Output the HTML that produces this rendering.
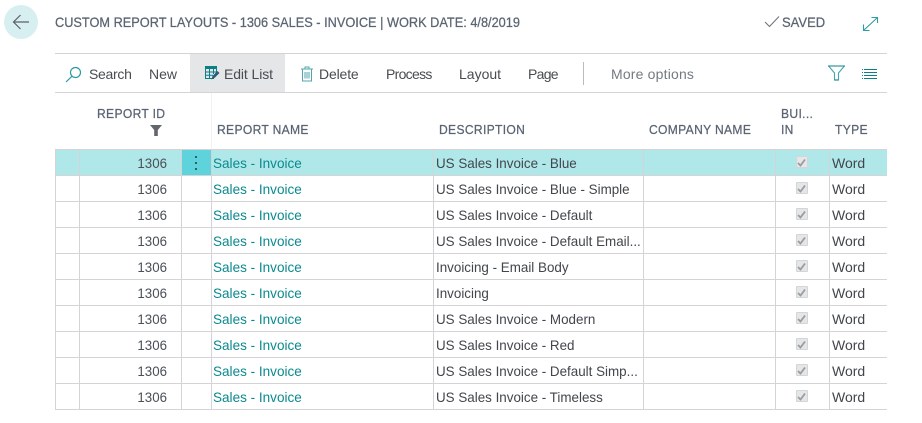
<!DOCTYPE html>
<html><head><meta charset="utf-8">
<style>
html,body{margin:0;padding:0;background:#fff}
#p{position:relative;width:922px;height:423px;overflow:hidden;background:#fff;font-family:"Liberation Sans",sans-serif;font-size:14px;color:#4b5058}
#p div,#p svg{position:absolute}
.t{white-space:nowrap;line-height:18px}
.h{color:#5a6472;font-size:13px;white-space:nowrap;line-height:16px;letter-spacing:.35px;transform:scaleX(.93);transform-origin:0 0;-webkit-text-stroke:.25px #5a6472}
.tb{color:#484c52;font-size:14px;white-space:nowrap;line-height:18px;top:65px}
.hl{left:55px;width:832px;height:1px;background:#d4d4d6}
.vl{width:1px;top:149px;height:261px;background:#d4d4d6}
.id{left:80px;width:87px;text-align:right;transform:scaleX(.95);transform-origin:100% 0}
.nm{left:213px;color:#0a8a8f;transform:scaleX(.967);transform-origin:0 0}
.ds{left:436px;color:#42464c;transform:scaleX(.957);transform-origin:0 0}
.wd{left:832px;color:#42464c}
.cb{left:796px;width:10px;height:10px;background:#e4e6e7;border:1px solid #d3d6d8;border-radius:1px}
.ck{left:796px}
</style></head><body><div id="p">

<div style="left:4px;top:5px;width:34px;height:34px;border-radius:50%;background:#d8eff2"></div>
<svg style="left:12px;top:13px" width="18" height="18" viewBox="0 0 18 18" fill="none" stroke="#5c6068" stroke-width="1.2"><path d="M1.5 9H17M8.5 2L1.5 9L8.5 16"/></svg>

<div class="t" style="left:55px;top:13px;font-size:14px;color:#5a6472;transform:scaleX(.911);transform-origin:0 0;-webkit-text-stroke:.25px #5a6472">CUSTOM REPORT LAYOUTS - 1306 SALES - INVOICE | WORK DATE: 4/8/2019</div>

<svg style="left:764px;top:15px" width="16" height="13" viewBox="0 0 16 13" fill="none" stroke="#6a7079" stroke-width="1"><path d="M1 7L5.5 11.5L15 1.5"/></svg>
<div class="t" style="left:782px;top:13px;font-size:14px;color:#5a6472;transform:scaleX(.93);transform-origin:0 0;-webkit-text-stroke:.25px #5a6472">SAVED</div>
<svg style="left:862px;top:16px" width="17" height="16" viewBox="0 0 17 16" fill="none" stroke="#2f9ca3" stroke-width="1.1"><path d="M1.5 14.5L15.5 1.5M9.5 1.5H15.5V7M1.500 8.500V14.500H7.500"/></svg>

<div class="hl" style="top:53px"></div>
<div class="hl" style="top:92px"></div>
<div style="left:190px;top:54px;width:95px;height:38px;background:#e5e6e8"></div>

<svg style="left:65px;top:66px" width="17" height="17" viewBox="0 0 17 17" fill="none" stroke="#2f9ca3" stroke-width="1.2"><circle cx="10.5" cy="6.5" r="5"/><path d="M7 10.2L1 16"/></svg>
<div class="tb" style="left:89px;letter-spacing:-.3px">Search</div>
<div class="tb" style="left:149px">New</div>
<svg style="left:205px;top:66px" width="15" height="14" viewBox="0 0 15 14" fill="none"><path d="M0 0H12V3H0Z" fill="#0a7f86"/><path d="M.5 3V12.5H9M4.500 3V12.500M8.500 3V8M.5 6H11.500M.5 9.300H8M11.500 3V6" stroke="#0a7f86"/><path d="M6.500 13.500L7.500 10L12.500 5L14.500 7L9.500 12Z" fill="#2b5f73"/></svg>
<div class="tb" style="left:224px;letter-spacing:-.1px">Edit List</div>
<svg style="left:300px;top:66px" width="14" height="16" viewBox="0 0 14 16" fill="none" stroke="#4fa7ae"><path d="M1 3H13M5 3V1H9V3M2.500 3V15H11.500V3M5 6V12.500M7 6V12.500M9 6V12.500"/></svg>
<div class="tb" style="left:319px;letter-spacing:-.15px">Delete</div>
<div class="tb" style="left:386px;letter-spacing:-.7px">Process</div>
<div class="tb" style="left:459px">Layout</div>
<div class="tb" style="left:528px;letter-spacing:-.7px">Page</div>
<div style="left:583px;top:62px;width:1px;height:23px;background:#b9bbbe"></div>
<div class="tb" style="left:611px;color:#747a82;letter-spacing:.18px">More options</div>
<svg style="left:828px;top:65px" width="17" height="16" viewBox="0 0 17 16" fill="none" stroke="#46a5ac" stroke-width="1.1"><path d="M0 1H17" stroke="#0a7f86"/><path d="M1 1.500L6.500 8V15H10.500V8L16 1.500"/><path d="M6.500 15H10.500" stroke="#0a7f86"/></svg>
<svg style="left:862px;top:69px" width="15" height="10" viewBox="0 0 15 10" stroke="#0a7f86"><path d="M0 .5H1M2 .5H15M0 3.500H1M2 3.500H15M0 6.500H1M2 6.500H15M0 9.500H1M2 9.500H15"/></svg>

<div style="left:211px;top:93px;width:1px;height:56px;background:#f2f2f3"></div>
<div class="h" style="left:97px;top:106px">REPORT ID</div>
<svg style="left:150px;top:125px" width="12" height="11" viewBox="0 0 12 11"><path d="M0 0H12L7.800 5V11H4.200V5Z" fill="#63666b"/></svg>
<div class="h" style="left:217px;top:122px">REPORT NAME</div>
<div class="h" style="left:439px;top:122px">DESCRIPTION</div>
<div class="h" style="left:649px;top:122px">COMPANY NAME</div>
<div class="h" style="left:781px;top:106px">BUI...</div>
<div class="h" style="left:781px;top:122px">IN</div>
<div class="h" style="left:835px;top:122px">TYPE</div>

<div style="left:55px;top:149px;width:832px;height:27px;background:#b0e8ea"></div>
<div style="left:182px;top:150px;width:29px;height:25px;background:#5fd3dc"></div>
<svg style="left:194px;top:156px" width="4" height="15" viewBox="0 0 4 15" fill="#2d5f68"><rect x="1" y="0" width="2" height="2"/><rect x="1" y="6" width="2" height="2"/><rect x="1" y="12" width="2" height="2"/></svg>

<div class="hl" style="top:149px"></div><div class="hl" style="top:175px"></div><div class="hl" style="top:201px"></div><div class="hl" style="top:227px"></div><div class="hl" style="top:253px"></div><div class="hl" style="top:279px"></div><div class="hl" style="top:305px"></div><div class="hl" style="top:331px"></div><div class="hl" style="top:357px"></div><div class="hl" style="top:383px"></div><div class="hl" style="top:409px"></div>
<div class="vl" style="left:55px"></div><div class="vl" style="left:79px"></div><div class="vl" style="left:181px"></div><div class="vl" style="left:211px"></div><div class="vl" style="left:433px"></div><div class="vl" style="left:643px"></div><div class="vl" style="left:775px"></div><div class="vl" style="left:829px"></div>

<div class="t id" style="top:154px">1306</div><div class="t nm" style="top:154px">Sales - Invoice</div><div class="t ds" style="top:154px">US Sales Invoice - Blue</div><div class="cb" style="top:156px"></div><div class="t wd" style="top:154px">Word</div>
<div class="t id" style="top:180px">1306</div><div class="t nm" style="top:180px">Sales - Invoice</div><div class="t ds" style="top:180px">US Sales Invoice - Blue - Simple</div><div class="cb" style="top:182px"></div><div class="t wd" style="top:180px">Word</div>
<div class="t id" style="top:206px">1306</div><div class="t nm" style="top:206px">Sales - Invoice</div><div class="t ds" style="top:206px">US Sales Invoice - Default</div><div class="cb" style="top:208px"></div><div class="t wd" style="top:206px">Word</div>
<div class="t id" style="top:232px">1306</div><div class="t nm" style="top:232px">Sales - Invoice</div><div class="t ds" style="top:232px">US Sales Invoice - Default Email...</div><div class="cb" style="top:234px"></div><div class="t wd" style="top:232px">Word</div>
<div class="t id" style="top:258px">1306</div><div class="t nm" style="top:258px">Sales - Invoice</div><div class="t ds" style="top:258px">Invoicing - Email Body</div><div class="cb" style="top:260px"></div><div class="t wd" style="top:258px">Word</div>
<div class="t id" style="top:284px">1306</div><div class="t nm" style="top:284px">Sales - Invoice</div><div class="t ds" style="top:284px">Invoicing</div><div class="cb" style="top:286px"></div><div class="t wd" style="top:284px">Word</div>
<div class="t id" style="top:310px">1306</div><div class="t nm" style="top:310px">Sales - Invoice</div><div class="t ds" style="top:310px">US Sales Invoice - Modern</div><div class="cb" style="top:312px"></div><div class="t wd" style="top:310px">Word</div>
<div class="t id" style="top:336px">1306</div><div class="t nm" style="top:336px">Sales - Invoice</div><div class="t ds" style="top:336px">US Sales Invoice - Red</div><div class="cb" style="top:338px"></div><div class="t wd" style="top:336px">Word</div>
<div class="t id" style="top:362px">1306</div><div class="t nm" style="top:362px">Sales - Invoice</div><div class="t ds" style="top:362px">US Sales Invoice - Default Simp...</div><div class="cb" style="top:364px"></div><div class="t wd" style="top:362px">Word</div>
<div class="t id" style="top:388px">1306</div><div class="t nm" style="top:388px">Sales - Invoice</div><div class="t ds" style="top:388px">US Sales Invoice - Timeless</div><div class="cb" style="top:390px"></div><div class="t wd" style="top:388px">Word</div>

<svg class="ck" style="top:157px" width="11" height="11" viewBox="0 0 11 11" fill="none" stroke="#9a9c9e" stroke-width="1.8"><path d="M2 6L4.500 8.500L9 2.500"/></svg>
<svg class="ck" style="top:183px" width="11" height="11" viewBox="0 0 11 11" fill="none" stroke="#9a9c9e" stroke-width="1.8"><path d="M2 6L4.500 8.500L9 2.500"/></svg>
<svg class="ck" style="top:209px" width="11" height="11" viewBox="0 0 11 11" fill="none" stroke="#9a9c9e" stroke-width="1.8"><path d="M2 6L4.500 8.500L9 2.500"/></svg>
<svg class="ck" style="top:235px" width="11" height="11" viewBox="0 0 11 11" fill="none" stroke="#9a9c9e" stroke-width="1.8"><path d="M2 6L4.500 8.500L9 2.500"/></svg>
<svg class="ck" style="top:261px" width="11" height="11" viewBox="0 0 11 11" fill="none" stroke="#9a9c9e" stroke-width="1.8"><path d="M2 6L4.500 8.500L9 2.500"/></svg>
<svg class="ck" style="top:287px" width="11" height="11" viewBox="0 0 11 11" fill="none" stroke="#9a9c9e" stroke-width="1.8"><path d="M2 6L4.500 8.500L9 2.500"/></svg>
<svg class="ck" style="top:313px" width="11" height="11" viewBox="0 0 11 11" fill="none" stroke="#9a9c9e" stroke-width="1.8"><path d="M2 6L4.500 8.500L9 2.500"/></svg>
<svg class="ck" style="top:339px" width="11" height="11" viewBox="0 0 11 11" fill="none" stroke="#9a9c9e" stroke-width="1.8"><path d="M2 6L4.500 8.500L9 2.500"/></svg>
<svg class="ck" style="top:365px" width="11" height="11" viewBox="0 0 11 11" fill="none" stroke="#9a9c9e" stroke-width="1.8"><path d="M2 6L4.500 8.500L9 2.500"/></svg>
<svg class="ck" style="top:391px" width="11" height="11" viewBox="0 0 11 11" fill="none" stroke="#9a9c9e" stroke-width="1.8"><path d="M2 6L4.500 8.500L9 2.500"/></svg>

</div></body></html>
